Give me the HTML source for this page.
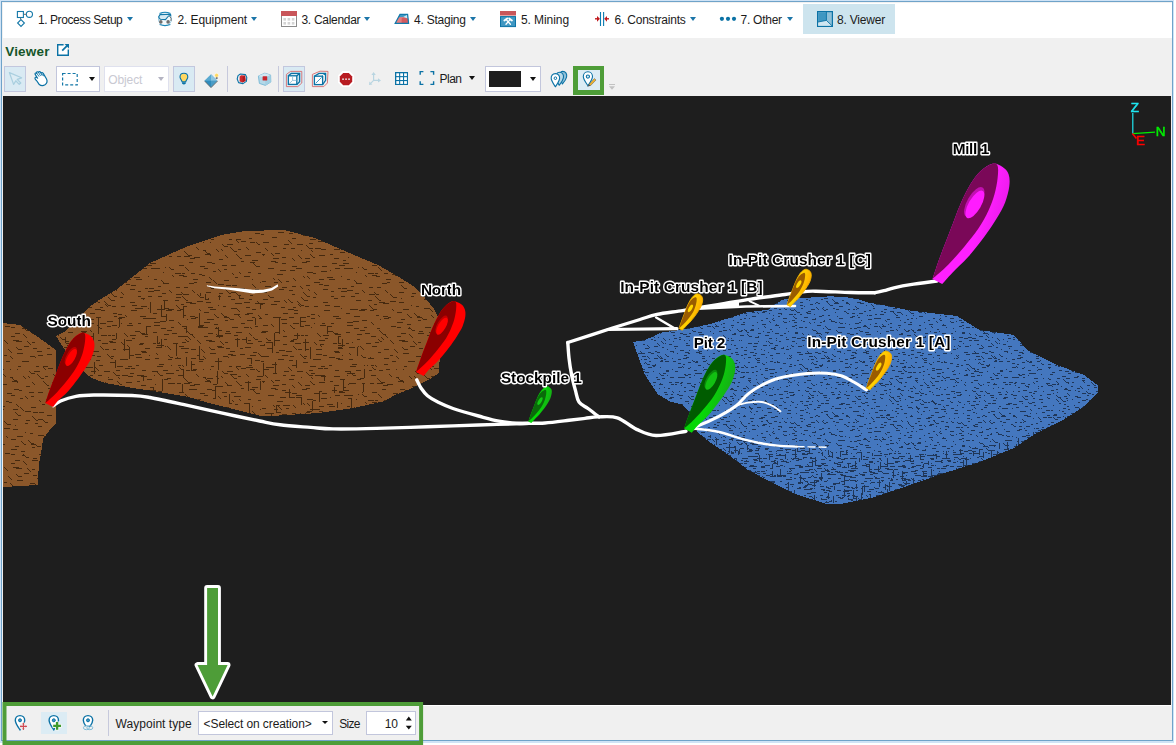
<!DOCTYPE html>
<html lang="en">
<head>
<meta charset="utf-8">
<title>Viewer</title>
<style>
html,body{margin:0;padding:0;}
body{width:1176px;height:745px;overflow:hidden;background:#fff;position:relative;font-family:"Liberation Sans",sans-serif;font-size:12px;color:#1b1b1b;}
.abs{position:absolute;}
#frame{left:0;top:0;width:1174px;height:743px;background:#cfe3f6;}
#frameline{left:1px;top:1px;width:1170px;height:738px;border:1px solid #6fa3c9;box-sizing:content-box;background:#f0f0f0;}
#menubar{left:3px;top:3px;width:1169px;height:35px;background:#fff;}
.mi{position:absolute;top:13px;height:14px;line-height:14px;font-size:12px;white-space:nowrap;color:#1b1b1b;}
.arr{position:absolute;width:0;height:0;border-left:3px solid transparent;border-right:3px solid transparent;border-top:4px solid #1b75a8;top:17px;}
.arrk{position:absolute;width:0;height:0;border-left:3.5px solid transparent;border-right:3.5px solid transparent;border-top:4px solid #111;}
#title{left:5.2px;top:43.5px;font-weight:bold;font-size:13.5px;letter-spacing:0.2px;color:#15562a;line-height:16px;}
#viewer{left:3px;top:96px;width:1168px;height:609px;background:#1e1e1e;overflow:hidden;}
#whiteline{left:3px;top:705px;width:1168px;height:1px;background:#fff;}
.tb{position:absolute;top:67px;height:24px;box-sizing:border-box;}
.sel{background:#d9eaf3;border:1px solid #c2c7de;}
.box{background:#fff;border:1px solid #c2c6dc;}
.sep{position:absolute;width:1px;background:#c8c8c8;}
.lbl{position:absolute;white-space:nowrap;font-size:12px;line-height:14px;}
</style>
</head>
<body>
<div id="frame" class="abs"></div>
<div id="frameline" class="abs"></div>
<div id="menubar" class="abs"></div>

<!-- MENU ITEMS -->
<div id="menu">
<div class="abs" style="left:803px;top:4px;width:92px;height:30px;background:#cde4ee;"></div>
<span class="mi" id="m1" style="left:38px;letter-spacing:-0.44px;">1. Process Setup</span><i class="arr" style="left:127px;"></i>
<span class="mi" id="m2" style="left:177.5px;letter-spacing:-0.1px;">2. Equipment</span><i class="arr" style="left:251px;"></i>
<span class="mi" id="m3" style="left:301.5px;letter-spacing:-0.3px;">3. Calendar</span><i class="arr" style="left:364px;"></i>
<span class="mi" id="m4" style="left:414px;letter-spacing:-0.23px;">4. Staging</span><i class="arr" style="left:470px;"></i>
<span class="mi" id="m5" style="left:521px;letter-spacing:-0.08px;">5. Mining</span>
<span class="mi" id="m6" style="left:614.5px;letter-spacing:-0.21px;">6. Constraints</span><i class="arr" style="left:690px;"></i>
<span class="mi" id="m7" style="left:740.5px;letter-spacing:-0.25px;">7. Other</span><i class="arr" style="left:787px;"></i>
<span class="mi" id="m8" style="left:837px;letter-spacing:-0.2px;">8. Viewer</span>
</div>


<svg class="abs" style="left:0;top:0" width="900" height="38" viewBox="0 0 900 38">
 <!-- 1 process -->
 <g fill="none" stroke="#1478a8" stroke-width="1.1">
  <rect x="17.4" y="11.5" width="6" height="6"/>
  <circle cx="29.4" cy="14.3" r="3.1"/>
  <path d="M21 19.6 L24.4 23 L21 26.4 L17.6 23 Z"/>
 </g>
 <path d="M24 14.3H26.2 M20.6 18v1.4" stroke="#666" stroke-width="1" fill="none"/>
 <!-- 2 equipment -->
 <g>
  <circle cx="165" cy="19" r="6.6" fill="#f4fafc" stroke="#8cc3dd" stroke-width="0.8"/>
  <path d="M159.5 13.6 Q165 11 170.5 13.6" fill="none" stroke="#1a86b8" stroke-width="1.1"/>
  <path d="M159.6 24.6 Q165 26.6 170.4 24.6" fill="none" stroke="#1a86b8" stroke-width="1.1"/>
  <path d="M158.6 17 L160 14.6 L170.6 14.3 L170.8 15.6 L168.5 16 L165.5 19.6 L160.3 19.3 Z" fill="#d5eaf3" stroke="#1478a8" stroke-width="1.1" stroke-linejoin="round"/>
  <path d="M169.6 16.2 Q171.8 18 171 21" fill="none" stroke="#666" stroke-width="0.9"/>
  <circle cx="160.8" cy="21.9" r="1.8" fill="#6e6e6e"/>
  <circle cx="168.1" cy="21.9" r="1.8" fill="#6e6e6e"/>
 </g>
 <!-- 3 calendar -->
 <g>
  <rect x="281.5" y="11.5" width="15" height="15" fill="#fff" stroke="#8c8c8c" stroke-width="1"/>
  <rect x="281" y="11" width="16" height="5" fill="#c9565a"/>
  <g fill="#d4d4d4">
   <rect x="283.4" y="18" width="2.6" height="2.6"/><rect x="287.6" y="18" width="2.6" height="2.6"/><rect x="291.8" y="18" width="2.6" height="2.6"/>
   <rect x="283.4" y="22" width="2.6" height="2.6"/><rect x="287.6" y="22" width="2.6" height="2.6"/><rect x="291.8" y="22" width="2.6" height="2.6"/>
  </g>
 </g>
 <!-- 4 staging -->
 <g>
  <path d="M395.2 23.3 L400 14.4 L407.6 14.4 L408.6 23.3 Z" fill="#e47f80"/>
  <path d="M401.6 18.4 L407.8 15 L408.6 23.3 L401.6 23.3 Z" fill="#d45a5e"/>
  <path d="M400 14.4 L407.6 14.4 L407.9 18.5 L403.5 17 L398.6 17.2 Z" fill="#3f97c2"/>
  <path d="M403.2 17 L407.4 14.8 L407.9 18.6 Z" fill="#cfe6f1"/>
  <path d="M395.2 23.3 L400 14.4 L407.6 14.4 L408.6 23.3 Z" fill="none" stroke="#0f79ab" stroke-width="1.2" stroke-linejoin="miter"/>
 </g>
 <!-- 5 mining -->
 <g>
  <rect x="500" y="11" width="16" height="4.6" fill="#c9565a"/>
  <rect x="500" y="15.6" width="16" height="0.6" fill="#f0b0b0"/>
  <rect x="500.5" y="16.6" width="15" height="10" fill="#3f97c2" stroke="#0b72a5" stroke-width="1"/>
  <g stroke="#fff" stroke-width="1.3" stroke-linecap="round" fill="none">
   <path d="M506 24.2 L510.3 19.4"/><path d="M510.4 24.2 L506 19.4"/>
   <path d="M504.4 20.4 L507.2 18.4" stroke-width="1.9"/><path d="M509.2 18.4 L511.9 20.4" stroke-width="1.9"/>
  </g>
 </g>
 <!-- 6 constraints -->
 <g>
  <path d="M600.5 12v14 M603.6 12v14" stroke="#0b7bb0" stroke-width="1.1" fill="none"/>
  <path d="M595 18.8h3" stroke="#c0181c" stroke-width="1.4"/>
  <path d="M597 15.9 L599.9 18.8 L597 21.7 Z" fill="#c0181c"/>
  <path d="M609 18.8h-3" stroke="#c0181c" stroke-width="1.4"/>
  <path d="M607 15.9 L604.2 18.8 L607 21.7 Z" fill="#c0181c"/>
 </g>
 <!-- 7 other -->
 <g fill="#0b72a5"><circle cx="721.9" cy="18.8" r="2.1"/><circle cx="728" cy="18.8" r="2.1"/><circle cx="734" cy="18.8" r="2.1"/></g>
 <!-- 8 viewer -->
 <g>
  <rect x="817.6" y="11.6" width="14.8" height="14.8" fill="#8fc0d8" stroke="#0b72a5" stroke-width="1.2"/>
  <path d="M818.2 12.2 H826.4 V20.4 L818.2 22 Z" fill="#3f97c2"/>
  <path d="M818.2 22 L826.4 20.4 L831.8 25.6 V25.8 H818.2 Z" fill="#cfe6f1"/>
  <path d="M826.4 12 V20.4 L832 25.8 M826.4 20.4 L818 22" fill="none" stroke="#0b72a5" stroke-width="0.9"/>
 </g>
</svg>
<div id="title" class="abs">Viewer</div>

<!-- TOOLBAR -->
<div id="toolbar">
<svg class="abs" style="left:50px;top:40px" width="30" height="20" viewBox="50 40 30 20">
 <path d="M63.6 44.8 H57.7 V55.3 H68.3 V49.6" fill="#fff" stroke="#0b72a5" stroke-width="1.4"/>
 <path d="M62.2 50.6 L68 44.9" stroke="#0b72a5" stroke-width="1.7" fill="none"/>
 <path d="M64.6 44 H69 V48.4 Z" fill="#0b72a5"/>
</svg>
<div class="tb sel" style="left:4px;top:66px;width:22px;height:26px;"></div>
<div class="tb box" style="left:56px;top:66px;width:44px;height:26px;"></div>
<div class="tb box" style="left:104px;top:66px;width:65px;height:26px;border-color:#dfe1ee;"></div>
<div class="tb sel" style="left:173px;top:66px;width:22px;height:26px;"></div>
<div class="tb sel" style="left:283px;top:66px;width:22px;height:26px;"></div>
<div class="tb box" style="left:485px;top:66px;width:56px;height:26px;"></div>
<div class="abs" style="left:573px;top:66px;width:31px;height:28.5px;background:#4e9d38;"></div>
<div class="abs" style="left:577.6px;top:70.2px;width:22.4px;height:20.2px;background:#dcecf4;"></div>
<div class="abs" style="left:489px;top:71px;width:32px;height:16px;background:#1e1e1e;"></div>
<span class="lbl" id="tobj" style="left:108.2px;top:72.5px;color:#c9c9d2;letter-spacing:-0.1px;">Object</span>
<span class="lbl" id="tplan" style="left:439.5px;top:71.7px;letter-spacing:-0.5px;">Plan</span>
<i class="arrk" style="left:88.5px;top:77px;"></i>
<i class="arrk" style="left:157.5px;top:77px;border-top-color:#b4b4c2;"></i>
<i class="arrk" style="left:468.5px;top:76px;"></i>
<i class="arrk" style="left:529.5px;top:77px;"></i>
<div class="sep" style="left:227px;top:66px;height:26px;background:#c6c9dc;"></div>
<div class="sep" style="left:278px;top:66px;height:26px;background:#c6c9dc;"></div>
<svg class="abs" style="left:0;top:60px" width="630" height="36" viewBox="0 60 630 36">
 <!-- pointer -->
 <path d="M9.4 72.6 L21.6 77.8 L17.2 79.4 L20.8 83 L19.2 84.4 L15.8 80.8 L13.6 84.4 Z" fill="#dcecf4" stroke="#a9cfdf" stroke-width="1.25" stroke-linejoin="round"/>
 <!-- hand -->
 <g fill="#fff" stroke="#0b72a5" stroke-width="1.2" stroke-linejoin="round" stroke-linecap="round">
  <path d="M36.5 80.5 C34.8 79.3 34.6 77.6 35.6 77.2 C36.4 76.9 37 77.4 37.6 78.2 L35.2 74.4 C34.6 73.2 36 72.4 36.8 73.4 L36.6 73 C36.2 71.8 37.8 71.3 38.4 72.3 L38.6 72.4 C38.6 71.4 40 71.2 40.5 72.2 L41.2 73 C41.6 72.2 42.8 72.4 43.2 73.4 L46.4 78.8 C47.6 81.2 47 83.4 45 84.8 C43 86 40.6 85.6 39 84.2 Z"/>
  <path d="M38.9 76.3 L36.9 73.4 M40.4 75.6 L38.5 72.5 M42 75.4 L40.6 72.4 M43.5 75.9 L42.6 74" fill="none" stroke-width="0.9"/>
 </g>
 <!-- dashed rect -->
 <rect x="62.6" y="73.5" width="14.6" height="11.4" fill="none" stroke="#1478a8" stroke-width="1.2" stroke-dasharray="3 2"/>
 <!-- bulb -->
 <g>
  <path d="M183.9 73.2 C186.4 73.2 187.8 75 187.8 77 C187.8 79 186 80 185.8 81.8 H182 C181.8 80 180 79 180 77 C180 75 181.4 73.2 183.9 73.2 Z" fill="#ffd862" stroke="#0b72a5" stroke-width="1.1"/>
  <path d="M182 82.2 H185.8 V83.6 Q183.9 85.6 182 83.6 Z" fill="#0b72a5"/>
 </g>
 <!-- diamond -->
 <g>
  <path d="M211 74.2 L217.4 80.8 L211 87.4 L204.4 80.8 Z" fill="#5aa9d0"/>
  <path d="M211 74.2 L217.4 80.8 L211 80.8 Z" fill="#8cc6e2"/>
  <path d="M204.4 80.8 L211 80.8 L211 87.4 Z" fill="#2f8cbd"/>
  <path d="M211 80.8 L217.4 80.8 L211 87.4 Z" fill="#4a9cc6"/>
  <path d="M204.8 81.2 L211 87.6 L217.6 81" fill="none" stroke="#6a6a6a" stroke-width="0.9"/>
  <circle cx="216.6" cy="75.4" r="2.1" fill="#ffd862" stroke="#fff" stroke-width="0.6"/>
  <rect x="215.8" y="77.2" width="1.8" height="1.8" fill="#777"/>
 </g>
 <!-- red cube -->
 <g>
  <path d="M240.4 74 L245.4 74.6 L246.8 77.4 L246.4 81.4 L243 83.6 L238.6 82.6 L237.2 79 L238 75.6 Z" fill="#e8f3f8" stroke="#0b72a5" stroke-width="1.1" stroke-linejoin="round"/>
  <path d="M241 75.2 L245 75.6 L245.6 80.8 L242.6 82.6 L239.6 81.6 L239.6 76.4 Z" fill="#cf2a2e"/>
  <path d="M242.6 77 L245 75.6 L245.6 80.8 L242.6 82.6 Z" fill="#b01c20"/>
 </g>
 <!-- translucent cube -->
 <g>
  <path d="M258.4 76 L264.8 73.2 L270.6 75 L270.8 82 L265.4 85.4 L259.4 83.4 Z" fill="#b4d8e8" stroke="#7fbcd8" stroke-width="1" stroke-linejoin="round"/>
  <path d="M258.4 76 L264.8 73.2 L270.6 75 L265 77.8 Z" fill="#d2e8f2"/>
  <path d="M265 77.8 L270.6 75 L270.8 82 L265.4 85.4 Z" fill="#a3cfe3"/>
  <rect x="262.6" y="76.2" width="4.6" height="4.4" fill="#c8262c" rx="0.6"/>
 </g>
 <!-- cube icon 1 -->
 <g fill="none">
  <path d="M286.4 74.4 L290.6 71.4 L301.8 71.4 L301.8 83 L297.8 86.6 L286.4 86.6 Z" stroke="#d56c6e" stroke-width="0.9"/>
  <rect x="288.4" y="75.8" width="8.4" height="8.6" stroke="#0b72a5" stroke-width="1.3" fill="#fff"/>
  <path d="M288.4 75.8 L291.2 73.4 H299.6 V81.8 L296.8 84.4 M296.8 75.8 L299.6 73.4" stroke="#0b72a5" stroke-width="1.3"/>
  <path d="M292.6 76.2 V80.4 H296.4 M292.6 80.4 L289 83.8" stroke="#8fc0d8" stroke-width="0.9"/>
 </g>
 <!-- cube icon 2 -->
 <g fill="none">
  <path d="M312.4 74.4 L320 71.2 L328 71.4 L327.4 83 L323.8 86.6 L312.4 86.6 Z" stroke="#d56c6e" stroke-width="0.9"/>
  <rect x="314.4" y="76.2" width="8.2" height="8.4" stroke="#0b72a5" stroke-width="1.3" fill="#fff"/>
  <path d="M314.4 76.2 L319 73.4 H325.6 V80.4 L322.6 84.6 M322.6 76.2 L325.6 73.4" stroke="#0b72a5" stroke-width="1.3"/>
  <path d="M315.6 83.4 L321.6 77.4" stroke="#3f97c2" stroke-width="1"/>
  <circle cx="323.8" cy="75.6" r="0.9" fill="#fff"/>
 </g>
 <!-- stop -->
 <g>
  <path d="M342.4 71 H349.6 L354 75.6 V82.6 L349.6 87 H342.4 L338 82.6 V75.6 Z" fill="#fff"/>
  <path d="M343.2 73 H348.8 L352.2 76.4 V81.8 L348.8 85.2 H343.2 L339.8 81.8 V76.4 Z" fill="#b81c22"/>
  <g fill="#e6d6d6"><rect x="342.2" y="78.4" width="1.7" height="1.6"/><rect x="345.2" y="78.4" width="1.7" height="1.6"/><rect x="348.2" y="78.4" width="1.7" height="1.6"/></g>
 </g>
 <!-- axes faded -->
 <g stroke="#b9d5e1" stroke-width="1.2" fill="#b9d5e1">
  <path d="M373.6 80.4 V74 M373.6 80.4 H378.6 M373.6 80.4 L370.4 83.6" fill="none"/>
  <path d="M371.4 75 L373.6 72 L375.8 75 Z" stroke="none"/>
  <path d="M378 78.2 L381 80.4 L378 82.6 Z" stroke="none"/>
  <path d="M369 85 L369.4 81.6 L372.4 84.6 Z" stroke="none"/>
 </g>
 <!-- grid -->
 <g>
  <rect x="395" y="72" width="13" height="13" fill="#0b72a5"/>
  <g fill="#fff">
   <rect x="396.3" y="73.3" width="2.8" height="2.8"/><rect x="400.2" y="73.3" width="2.8" height="2.8"/><rect x="404.1" y="73.3" width="2.8" height="2.8"/>
   <rect x="396.3" y="77.2" width="2.8" height="2.8"/><rect x="400.2" y="77.2" width="2.8" height="2.8"/><rect x="404.1" y="77.2" width="2.8" height="2.8"/>
   <rect x="396.3" y="81.1" width="2.8" height="2.8"/><rect x="400.2" y="81.1" width="2.8" height="2.8"/><rect x="404.1" y="81.1" width="2.8" height="2.8"/>
  </g>
 </g>
 <!-- brackets -->
 <path d="M423.4 71.6 H420.2 V74.8 M430.4 71.6 H433.6 V74.8 M423.4 84.4 H420.2 V81.2 M430.4 84.4 H433.6 V81.2" fill="none" stroke="#0b72a5" stroke-width="1.4"/>
 <!-- pins -->
 <g stroke="#0b72a5" stroke-width="1.1" stroke-linejoin="round">
  <path d="M562.6 71.4 C565.8 71.4 567.2 74.2 566.6 77 C566 80 563.6 82.6 562.4 84 C561 81.6 559.6 79.4 559.4 76.4 C559.2 73.4 560.6 71.4 562.6 71.4 Z" fill="#8fc0d8"/>
  <path d="M559.4 72.2 C562.6 72.2 564 75 563.4 77.8 C562.8 80.8 560.4 83.6 559.2 85.2 C557.8 82.8 556 80.4 555.8 77.4 C555.6 74.4 557.2 72.2 559.4 72.2 Z" fill="#b9d9e8"/>
  <path d="M555.4 73.6 C558.4 73.6 559.8 76 559.6 78.4 C559.4 81.2 556.8 84.6 555.4 86.8 C554 84.6 551.4 81.2 551.2 78.4 C551 76 552.4 73.6 555.4 73.6 Z" fill="#fff"/>
  <circle cx="555.4" cy="78.2" r="1.3" fill="#fff" stroke-width="1"/>
 </g>
 <!-- pin with pencil -->
 <g>
  <path d="M587.9 71.8 C590.9 71.8 592.5 74.2 592.5 76.6 C592.5 79.6 589.4 83.4 587.9 85.6 C586.4 83.4 583.3 79.6 583.3 76.6 C583.3 74.2 584.9 71.8 587.9 71.8 Z" fill="#fff" stroke="#0b72a5" stroke-width="1.1"/>
  <circle cx="587.9" cy="76.6" r="1.6" fill="#dcecf4" stroke="#0b72a5" stroke-width="1.1"/>
  <path d="M589 84.4 L594.4 78.6 L596 80 L590.4 85.8 Z" fill="#f2b62c" stroke="#555" stroke-width="0.5"/>
  <path d="M589 84.4 L590.4 85.8 L587.2 86.8 Z" fill="#444"/>
 </g>
 <!-- overflow -->
 <path d="M609 84.5 H615" stroke="#c2c2c2" stroke-width="1"/>
 <path d="M609 86.2 H615 L612 89.8 Z" fill="#c2c2c2"/>
</svg>
</div>

<!-- VIEWER -->
<div id="viewer" class="abs"><!--VIEWER_START-->
<svg width="1168" height="609" viewBox="3 96 1168 609" style="position:absolute;left:0;top:0;display:block">
<defs>
<pattern id="pbrown" width="193" height="127" patternUnits="userSpaceOnUse"><rect width="193" height="127" fill="#8b572a"/><path id="pbrown_p" d="M1 3.5h6M12 0.5h6M17 1.5h1M26 5.5h4M32 1l3 3M43 0l4 4M47 4.5h2M52 1.5h6M59 6.5h6M69 0.5h3M70 1.5h1M80 4.5h6M89 3.5h4M99 4l3 3M105 1l4 4M112 4.5h5M117 0l3 3M120 3.5h2M126 1.5h6M137 0.5h3M141 4.5h5M150 6.5h3M155 3.5h1M169 2.5h3M177 2.5h4M184 2.5h6M190 4.5h5M7 12.5h5M14 8.5h5M19 9.5h3M29 11.5h5M38 11.5h5M48 7.5h3M57 8.5h5M59 8l4 4M63 12.5h3M66 12.5h1M78 7.5h5M82 8.5h3M89 9.5h4M99 12.5h5M109 8.5h5M113 7.5h4M121 12.5h5M129 12.5h5M139 9.5h5M146 11.5h6M150 9.5h6M165 13.5h1M169 13l2 2M171 15.5h3M179 11.5h5M185 13l4 4M189 8.5h4M6 20.5h3M11 14.5h4M20 17.5h3M25 15l3 3M31 15.5h3M39 19l2 2M46 18l2 2M55 18.5h3M65 19.5h3M75 14.5h6M84 20.5h6M87 16.5h6M97 16.5h5M103 14.5h6M114 18.5h6M120 19.5h3M128 17.5h6M137 16.5h1M142 14.5h5M151 14.5h6M155 14.5h5M163 18.5h1M175 19.5h6M182 19.5h3M191 19.5h4M9 21.5h3M16 23l3 3M20 26l4 4M31 26.5h4M35 26.5h1M42 23.5h3M51 22.5h6M59 25.5h1M69 27.5h4M80 24l2 2M85 25l4 4M93 27.5h3M100 24l3 3M110 22l2 2M114 22l3 3M126 25.5h5M134 23.5h6M136 25.5h6M148 22.5h1M154 25.5h3M161 26l3 3M172 21l2 2M179 21.5h5M183 22.5h4M0 25.5h5M1 28.5h3M13 28.5h5M15 31l3 3M18 34.5h3M25 30.5h6M33 31.5h5M39 31.5h5M47 34.5h5M59 30l4 4M67 28.5h1M72 32.5h6M81 28.5h4M89 33.5h5M99 32.5h4M107 32l3 3M113 31.5h4M121 28.5h6M126 30.5h4M131 31.5h5M145 34.5h3M149 34.5h5M158 32.5h3M163 29.5h6M176 33.5h4M184 33.5h4M189 29.5h5M4 40l3 3M7 43.5h4M13 38.5h5M26 39.5h4M32 35l4 4M36 39.5h2M38 38.5h4M42 38l3 3M45 41.5h3M57 41.5h3M62 35.5h4M69 38.5h5M75 41l2 2M77 43.5h4M86 35.5h5M96 36.5h4M99 40.5h3M110 38l4 4M114 42.5h3M115 35l2 2M121 38l3 3M130 35.5h5M138 37.5h3M148 37.5h6M154 36.5h6M162 39.5h4M169 36l3 3M176 40.5h6M181 38l2 2M183 40.5h3M192 36l3 3M4 47.5h6M13 48.5h5M15 44.5h1M25 42.5h3M35 42.5h3M38 45.5h4M51 48.5h6M56 45.5h3M64 47l3 3M67 50.5h3M70 45.5h5M81 47.5h6M91 46l3 3M95 45l3 3M98 48.5h2M104 47l4 4M108 51.5h3M108 43l3 3M111 46.5h4M120 43.5h3M130 48.5h5M138 42.5h3M141 44.5h4M148 42.5h4M158 42.5h4M163 46.5h5M175 46.5h4M182 42l4 4M186 46.5h2M186 48.5h6M6 55l2 2M17 55.5h6M25 51.5h1M30 52.5h3M38 54.5h5M43 54l4 4M53 53.5h4M59 55.5h4M68 49.5h4M78 50.5h6M88 53.5h4M95 55.5h6M100 53.5h3M105 50l3 3M112 52.5h4M121 52.5h4M132 51.5h5M141 52.5h6M148 54.5h1M157 55.5h4M161 55.5h4M168 55.5h6M176 51l4 4M180 55.5h4M181 50.5h3M190 49.5h6M2 63.5h3M11 58.5h5M21 60l3 3M24 63.5h2M28 59l3 3M31 62.5h3M31 63.5h4M45 61l3 3M52 60.5h4M54 59.5h6M65 61l4 4M72 60.5h3M82 63.5h6M90 59.5h5M96 63.5h5M101 56.5h4M114 62.5h3M118 60.5h4M125 61l2 2M131 56.5h6M140 62.5h6M153 59.5h4M161 62.5h6M166 56.5h6M177 56.5h4M183 61.5h3M190 62.5h5M11 68.5h6M15 65.5h4M21 70.5h4M32 66.5h3M35 63l2 2M37 65.5h4M48 69.5h4M54 66.5h6M59 63.5h3M66 64.5h3M80 63.5h4M88 65.5h6M89 69.5h5M100 69.5h6M107 67.5h6M118 64.5h4M121 69.5h1M129 69.5h3M138 69.5h3M143 64.5h5M154 68.5h6M160 67.5h6M169 66.5h5M178 68l3 3M187 65.5h1M191 64.5h5M5 72.5h5M11 73.5h4M22 74.5h3M23 73l3 3M26 76.5h3M33 77.5h4M39 73.5h6M51 73.5h5M57 73l2 2M62 72.5h3M70 71.5h5M78 70l3 3M90 76l2 2M97 71l3 3M100 74.5h2M107 72.5h4M112 71.5h5M118 73.5h1M127 71.5h6M135 77.5h5M139 77l2 2M141 79.5h4M154 71.5h6M161 74.5h5M167 76.5h5M171 73.5h3M184 74.5h3M186 76l4 4M190 80.5h3M11 82.5h4M15 79.5h5M23 80l4 4M32 79.5h6M41 81.5h4M43 78.5h6M56 79l3 3M60 83l2 2M62 85.5h3M68 78.5h5M73 84l2 2M75 86.5h3M82 78.5h4M90 82.5h4M101 81.5h6M108 81.5h3M112 81.5h3M124 79l4 4M130 81.5h6M142 80.5h6M145 82.5h3M153 78.5h4M164 80.5h5M172 79.5h5M178 82.5h5M188 83l3 3M192 81l3 3M4 86l4 4M13 86.5h6M16 87.5h6M27 87l4 4M32 88.5h3M42 85.5h5M49 85.5h5M55 86.5h3M65 87.5h4M71 90.5h1M82 86.5h5M90 90.5h4M98 86.5h3M102 89.5h6M110 88.5h6M121 88l3 3M126 86.5h6M132 84.5h3M140 89.5h4M153 89.5h3M159 88.5h1M164 85.5h3M173 89.5h5M182 88.5h4M185 85l2 2M187 87.5h2M8 95l4 4M16 93l2 2M18 95.5h4M24 92.5h5M33 94.5h4M37 97.5h5M47 94.5h3M52 93.5h3M60 98.5h4M67 91.5h5M74 94.5h6M86 96.5h6M93 97.5h6M100 92l4 4M105 95.5h4M113 95.5h3M123 95.5h6M127 91l2 2M141 97.5h5M145 94.5h5M156 93.5h6M165 92.5h1M167 92l4 4M179 92.5h5M185 98.5h3M191 95.5h5M4 101.5h3M10 102l3 3M17 99.5h6M30 102.5h5M35 103.5h1M38 101.5h5M47 100.5h5M57 101.5h6M65 99l3 3M68 102.5h4M72 102.5h4M83 98.5h3M89 101.5h6M97 102.5h4M107 100l4 4M111 104.5h2M111 102.5h3M120 105.5h4M130 101.5h4M136 103.5h6M142 98.5h5M149 101.5h1M156 99l2 2M168 101l2 2M170 103.5h3M175 104.5h6M177 103l2 2M191 104.5h5M6 107.5h4M18 112.5h3M22 107.5h6M28 107.5h1M36 112.5h3M43 112.5h5M56 111.5h3M62 106.5h5M68 107.5h3M79 110.5h5M85 105.5h6M96 106.5h4M99 111.5h4M110 108.5h5M117 112.5h6M123 105.5h5M128 112.5h4M136 111.5h3M145 105.5h5M157 112.5h6M159 110.5h5M171 111.5h1M178 111.5h3M182 111l2 2M191 110.5h4M0 115.5h4M10 115.5h1M17 115.5h1M29 117l2 2M31 119.5h4M34 117.5h6M43 113l3 3M48 114.5h5M57 115.5h5M63 115l2 2M65 117.5h2M70 115.5h6M80 119.5h4M91 117.5h5M95 113l4 4M104 117.5h6M113 118l3 3M116 121.5h4M116 116.5h4M125 114.5h5M131 114.5h4M142 116.5h4M152 117.5h6M156 117l4 4M160 121.5h3M163 116.5h5M176 116.5h3M179 113l2 2M181 115.5h2M186 116.5h4M10 123.5h3M11 123l3 3M14 126.5h3M23 122l3 3M28 122l2 2M37 120l4 4M41 124.5h3M45 122.5h3M53 120l3 3M63 125.5h5M72 121l3 3M78 126l3 3M82 126.5h5M90 121.5h3M98 121.5h4M108 123.5h1M118 123l2 2M122 121.5h6M128 122.5h5M141 122.5h6M147 125.5h5M154 121.5h1M164 125.5h4M167 124.5h4M178 121.5h5M184 124l4 4M188 128.5h4M3 120l3 3" stroke="#45290f" stroke-width="1" fill="none" shape-rendering="crispEdges"/><use href="#pbrown_p" x="-193"/><use href="#pbrown_p" y="-127"/><use href="#pbrown_p" x="-193" y="-127"/></pattern>
<pattern id="pblue" width="167" height="113" patternUnits="userSpaceOnUse"><rect width="167" height="113" fill="#4477bf"/><path id="pblue_p" d="M1 0l1 1M5 2.5h1M11 0.5h2M16 1.5h1M21 1l1 1M28 4.5h2M32 0.5h3M39 3.5h4M45 1.5h2M49 2.5h4M54 1.5h3M59 1.5h2M63 1.5h3M71 1.5h1M73 1l1 1M80 4.5h4M86 4.5h4M90 2l1 1M98 2l1 1M100 2l2 2M102 4.5h3M108 1.5h1M111 2.5h2M118 0.5h3M124 2.5h3M128 4.5h1M134 1.5h3M139 1.5h2M141 1.5h3M150 0.5h2M153 1.5h2M160 2l3 3M164 4.5h1M6 7.5h3M8 7.5h2M18 6.5h4M18 4.5h2M28 7.5h2M31 5.5h3M37 6.5h3M44 6.5h2M45 7l2 2M50 4.5h1M57 5.5h2M63 5l1 1M66 6.5h2M73 8.5h2M78 8l1 1M85 7.5h4M88 7.5h1M95 6.5h4M101 6.5h1M106 8.5h2M107 6.5h3M115 8.5h1M119 7l1 1M123 6l1 1M124 7.5h2M130 7.5h4M135 6.5h1M142 5.5h2M146 6l3 3M153 7.5h4M156 4l3 3M161 8.5h2M1 5.5h3M2 12.5h4M7 9.5h1M12 11.5h4M17 13.5h4M21 11.5h1M30 11l1 1M31 12.5h3M34 9.5h4M39 11l1 1M42 9.5h2M49 11l1 1M50 12.5h2M55 11.5h3M60 10.5h3M67 13.5h3M68 9.5h2M76 11.5h3M82 13.5h4M86 10.5h2M93 10.5h1M96 11.5h1M103 9.5h4M106 10.5h2M113 9.5h3M118 10.5h3M122 9.5h1M129 13.5h3M131 13.5h2M139 12l2 2M141 14.5h3M144 9.5h4M147 13.5h2M154 12.5h2M156 13.5h3M166 10.5h1M5 13l1 1M9 14.5h1M16 16.5h3M20 14.5h2M28 13.5h4M31 14.5h3M34 17.5h3M41 17.5h1M45 14.5h2M53 16l2 2M59 17.5h4M63 14.5h2M68 15.5h3M73 16.5h2M76 15.5h3M85 16.5h3M87 14.5h2M93 15.5h4M100 13.5h1M102 16.5h3M108 14.5h4M116 14.5h1M121 16l3 3M123 16l1 1M131 15.5h4M137 14.5h4M141 17.5h4M146 17l3 3M149 13l1 1M150 14.5h3M156 16l3 3M159 19.5h3M159 17l3 3M164 15l2 2M166 17.5h2M4 19l1 1M10 20.5h3M15 19.5h4M18 18.5h3M24 21l1 1M25 22.5h2M28 22.5h2M34 19.5h3M38 21.5h1M44 19.5h3M47 20.5h1M57 20.5h2M62 22.5h2M63 20.5h1M68 21.5h2M76 19.5h1M80 18.5h3M87 19l2 2M89 21.5h3M89 19.5h3M98 18.5h1M102 22.5h3M104 19.5h1M109 22l1 1M110 23.5h2M119 19.5h1M121 19.5h2M129 21.5h2M134 20.5h1M140 20l1 1M143 20.5h3M148 22.5h2M153 19.5h4M160 21.5h2M163 20.5h2M5 22.5h3M10 24.5h3M15 25.5h2M20 23.5h3M27 23.5h3M30 26.5h3M35 22.5h3M39 24l1 1M40 25.5h2M46 25.5h3M53 26.5h2M56 26.5h1M65 24.5h4M69 27.5h2M71 23.5h1M76 26l2 2M78 28.5h2M80 23.5h2M89 23.5h3M94 24l1 1M95 25.5h2M98 23l1 1M106 23.5h2M109 23.5h3M115 24.5h3M122 25.5h2M126 26.5h2M131 25.5h3M134 26l3 3M137 29.5h3M143 24.5h1M144 23l2 2M146 25.5h3M151 26.5h4M154 25.5h1M159 22.5h3M164 22.5h4M4 30.5h1M10 28.5h4M14 27l2 2M20 29.5h2M22 28.5h1M26 31.5h3M35 28.5h1M36 30.5h4M46 28.5h3M47 29.5h1M56 27.5h2M61 27.5h2M67 28.5h4M68 30l2 2M70 32.5h2M73 28.5h3M83 28.5h3M87 27.5h2M92 30.5h1M97 29.5h3M101 30.5h4M105 30.5h2M112 29.5h2M119 31.5h1M121 27.5h3M130 31.5h2M132 29l3 3M139 30l2 2M141 32.5h3M142 30.5h2M147 28.5h4M152 27.5h2M159 28.5h1M165 31.5h3M7 32.5h3M8 32.5h2M16 35.5h2M20 35.5h3M27 34.5h4M31 34.5h3M35 31.5h1M39 35.5h1M48 35.5h3M50 33.5h3M57 31.5h3M63 32.5h4M66 34.5h3M73 33.5h4M78 33.5h3M84 33.5h2M88 32.5h2M93 35.5h2M97 31.5h3M102 34.5h4M107 33.5h2M117 32.5h2M118 35.5h3M124 34l1 1M131 35.5h2M136 34.5h3M139 32.5h4M144 33.5h4M152 32.5h1M158 34l2 2M160 36.5h3M162 34.5h3M165 32.5h3M2 38.5h4M10 38.5h4M14 38.5h3M17 36.5h3M21 38.5h2M26 36.5h1M32 39.5h4M41 39l1 1M46 39.5h1M47 40.5h2M55 39.5h3M60 37.5h4M64 39.5h4M72 38.5h4M75 37.5h2M80 39.5h3M88 36l1 1M88 40.5h1M96 38l1 1M97 39.5h3M102 37.5h3M107 37l2 2M109 39.5h2M111 38.5h4M119 40l3 3M122 43.5h2M121 39.5h3M129 36.5h4M130 36.5h3M136 37.5h4M142 36.5h3M146 36.5h1M155 38.5h2M161 39.5h3M166 36.5h1M7 43.5h4M12 44.5h2M13 43.5h2M19 44.5h4M26 45.5h2M31 43l2 2M34 42.5h2M44 44.5h4M44 44l2 2M46 46.5h3M50 45.5h4M54 42l3 3M61 40l3 3M64 43.5h3M66 44.5h1M70 43.5h2M80 41.5h3M81 42l2 2M89 43l3 3M92 46.5h2M95 42l3 3M100 42.5h4M106 41.5h2M110 41.5h1M115 40.5h4M120 43l1 1M126 41.5h1M130 43.5h1M136 43.5h2M139 41.5h4M143 44l2 2M145 46.5h2M152 43.5h3M156 40.5h3M159 44.5h1M1 43.5h3M3 45.5h3M7 45.5h2M13 46.5h1M16 48.5h2M23 46l1 1M24 47.5h3M26 48.5h1M36 47.5h1M39 47.5h2M46 46.5h4M50 47.5h1M55 45.5h2M59 47.5h1M63 49.5h2M69 47.5h2M75 49.5h3M78 47l3 3M85 46.5h3M92 48.5h3M97 46.5h3M101 49.5h2M105 48.5h1M112 48.5h1M118 47.5h2M121 46.5h1M129 45.5h1M130 46.5h1M139 48.5h2M141 49.5h3M148 45.5h1M153 46.5h1M158 45.5h4M163 48.5h1M4 52l2 2M11 52.5h1M16 52.5h2M21 51.5h4M27 53.5h3M32 52.5h3M36 49.5h1M41 52.5h1M49 51.5h3M54 50.5h2M55 53.5h1M62 50.5h4M66 51.5h3M73 51.5h1M76 52.5h2M84 52l2 2M86 54.5h3M86 50.5h1M94 52.5h2M97 53.5h1M104 50.5h1M109 50.5h2M116 52.5h4M121 53.5h4M125 53.5h1M130 51.5h2M137 51l1 1M138 52.5h3M141 54l2 2M143 56.5h3M145 52.5h3M150 52l2 2M152 54.5h3M158 49.5h1M163 53.5h3M0 49.5h2M3 55.5h2M9 55.5h2M11 56.5h4M20 57l3 3M23 57.5h3M29 56l2 2M31 54.5h2M38 56.5h2M45 55.5h4M51 54.5h1M54 56l2 2M56 58.5h3M62 57.5h3M65 54l3 3M73 57.5h3M75 58.5h4M80 54.5h4M85 56.5h2M90 55.5h2M98 55.5h1M101 56.5h4M106 55.5h2M111 55.5h4M119 54.5h1M122 56.5h4M125 55.5h2M134 56l1 1M140 57l3 3M144 58.5h2M149 56l1 1M155 56.5h4M156 58.5h3M164 55.5h3M2 58.5h4M12 59.5h2M17 62.5h4M23 60.5h3M26 63l1 1M27 64.5h3M31 59.5h2M37 60.5h4M39 63.5h2M45 58l1 1M46 59.5h2M54 60l3 3M58 59l3 3M61 62.5h3M64 59.5h2M65 61.5h1M70 60l1 1M80 61.5h4M84 60.5h2M87 61l2 2M89 63.5h3M96 62.5h3M97 61l3 3M100 64.5h2M106 61.5h3M112 59.5h3M115 62.5h1M118 58.5h3M123 62l1 1M124 63.5h2M132 62.5h3M138 62.5h3M140 59.5h3M144 62.5h1M149 61l2 2M158 61.5h3M161 59.5h1M1 59.5h3M4 65.5h4M6 64.5h4M11 65.5h4M20 64.5h1M23 67.5h3M30 63.5h3M32 66.5h2M41 67.5h4M42 67.5h2M51 66.5h1M57 64.5h2M62 65.5h2M65 67.5h2M72 66.5h1M76 63.5h2M81 67l2 2M83 69.5h2M85 64l1 1M86 65.5h3M93 63.5h2M98 63l3 3M103 65.5h3M108 67l2 2M111 66.5h3M116 63.5h2M122 66.5h1M129 65.5h1M134 64.5h1M136 66.5h4M141 65.5h3M150 66.5h3M153 64.5h3M157 64.5h4M164 67.5h2M3 69.5h3M10 69.5h1M14 68.5h3M18 72.5h4M28 70.5h1M29 71.5h1M36 69.5h2M39 69.5h1M44 71.5h4M49 71.5h2M57 71.5h1M61 69.5h3M66 70.5h2M73 68.5h4M76 68l2 2M81 68l3 3M89 68.5h4M94 71.5h1M99 69.5h4M106 70.5h3M107 70.5h4M116 69.5h3M120 71.5h3M127 68.5h2M132 71.5h4M137 70.5h1M139 68l2 2M146 70.5h2M149 68.5h3M156 72.5h4M163 69.5h1M0 69.5h3M0 76l1 1M1 77.5h3M7 74.5h2M11 76.5h2M20 72.5h4M22 76.5h4M28 74.5h1M34 74.5h1M40 73.5h3M45 76.5h3M51 76.5h4M52 75.5h3M60 72.5h2M62 74.5h2M69 74.5h3M76 76.5h1M82 72l2 2M86 75.5h1M88 72.5h2M96 76.5h3M100 73.5h4M109 72.5h2M111 74.5h1M119 74.5h4M120 74.5h1M128 74l1 1M132 76.5h3M138 73.5h2M141 74.5h1M148 76.5h2M153 73.5h2M158 75.5h2M164 73l3 3M167 76.5h3M4 80.5h4M11 77.5h3M13 77l2 2M20 80l2 2M22 82.5h2M25 77.5h4M31 79.5h1M36 78l3 3M41 78.5h4M46 78.5h4M51 78l2 2M53 80.5h3M55 78.5h4M61 77.5h1M66 81l1 1M71 78.5h1M75 77.5h3M82 79.5h4M91 79.5h4M93 78.5h4M98 81l3 3M101 84.5h3M103 78.5h4M107 77.5h3M114 79.5h1M119 79.5h1M123 78.5h1M132 79.5h3M136 80.5h1M142 78.5h3M147 77.5h1M150 77.5h2M155 81l1 1M159 76l3 3M162 79.5h3M166 77.5h2M1 83.5h3M9 85.5h2M13 83.5h2M18 83.5h2M21 83.5h1M29 85.5h2M34 84.5h2M38 82.5h2M46 85.5h2M49 83.5h3M55 85.5h4M58 82.5h4M67 82.5h1M72 82l2 2M73 84l3 3M76 87.5h3M80 84.5h2M83 82.5h2M93 82.5h2M95 85.5h4M99 81.5h1M106 82.5h3M111 83.5h2M116 82l1 1M117 83.5h2M122 83l1 1M123 84.5h3M126 83l3 3M129 86.5h3M133 82.5h2M140 85.5h3M143 83.5h4M148 81l3 3M154 82l2 2M156 84.5h2M158 83.5h2M165 82.5h2M2 90.5h1M11 86l1 1M12 87.5h2M17 87.5h3M22 89.5h1M24 87.5h4M32 89.5h1M34 89.5h3M40 88.5h2M45 88.5h4M49 86.5h2M58 86l3 3M61 89.5h2M62 86.5h4M66 87l2 2M71 89l1 1M78 89.5h1M84 86.5h3M89 86l2 2M94 86.5h3M101 87.5h1M105 89.5h1M110 87.5h4M113 88.5h1M121 88.5h4M126 88.5h2M132 88.5h2M138 86.5h2M139 87.5h4M146 88l1 1M151 90.5h3M154 89.5h2M160 89.5h2M0 86.5h1M4 92.5h4M6 92.5h2M15 91.5h3M17 90.5h3M23 91.5h2M26 94l1 1M33 93.5h4M39 92.5h4M43 92.5h3M50 94l2 2M52 93.5h3M61 91.5h4M65 94l1 1M72 93.5h2M76 92.5h2M81 92.5h1M84 90.5h4M93 94.5h2M98 92.5h2M104 93l1 1M105 92.5h1M110 90.5h2M115 92.5h4M124 94.5h3M125 90l2 2M127 92.5h2M133 94.5h1M136 91.5h4M144 93.5h4M147 92.5h1M156 94.5h1M161 93.5h1M162 93l2 2M4 96l1 1M5 97.5h3M10 97.5h1M14 98l1 1M20 97.5h4M24 96.5h2M29 99.5h2M35 98l1 1M40 97.5h2M47 98l3 3M53 98.5h1M55 97.5h2M63 99.5h3M69 96.5h2M73 98.5h4M75 96.5h2M84 99.5h2M89 96.5h1M94 98.5h4M101 95l2 2M105 94.5h2M108 98.5h1M115 95l1 1M116 96.5h3M121 95.5h1M126 96.5h3M127 99.5h2M135 95.5h2M141 96l2 2M146 96.5h1M152 96.5h2M155 95.5h2M163 95.5h4M0 96.5h2M3 101.5h4M7 101.5h3M15 102.5h2M19 102.5h3M22 101.5h4M28 100.5h4M31 100l2 2M33 102.5h2M39 100.5h4M44 100l3 3M47 100.5h4M55 101.5h2M61 103l2 2M64 101.5h1M69 103l2 2M71 105.5h3M76 103l3 3M79 106.5h2M82 104.5h2M83 103.5h3M90 102.5h1M96 100l2 2M102 103.5h2M107 99.5h4M111 101.5h1M118 102.5h1M124 100.5h3M128 102l1 1M131 101.5h4M137 101.5h2M144 103l1 1M145 104.5h3M149 99.5h4M155 102.5h1M157 100l3 3M160 103.5h3M162 103l1 1M4 106.5h3M12 107.5h3M15 108.5h4M21 107.5h2M24 104l1 1M25 105.5h3M30 106.5h4M34 108.5h2M42 105l1 1M45 107.5h1M51 105.5h3M55 104.5h4M64 108.5h4M66 107.5h2M73 104.5h2M78 104.5h1M82 104.5h4M90 107.5h3M95 105.5h1M99 106.5h3M104 105.5h1M107 107.5h4M116 107.5h2M120 105.5h1M127 106.5h3M127 107.5h3M134 107l2 2M140 108l2 2M148 105l2 2M150 107.5h3M148 107.5h3M157 106.5h4M159 107.5h1M1 104l2 2M3 106.5h2M5 109.5h2M6 112.5h3M11 111.5h2M18 110.5h4M25 111.5h1M31 108.5h4M34 108.5h2M39 111l1 1M43 112.5h3M52 110.5h2M55 109l3 3M60 112.5h1M63 112.5h1M72 109.5h4M73 109.5h2M79 108l2 2M81 110.5h3M87 111.5h4M90 110.5h1M97 109.5h4M101 112.5h3M108 112.5h1M112 109.5h3M118 111.5h1M124 111.5h4M129 112.5h4M133 111.5h4M137 112.5h4M144 110.5h4M151 109l3 3M153 108.5h1M157 111.5h1M162 112l3 3" stroke="#1f3658" stroke-width="1" fill="none" shape-rendering="crispEdges"/><use href="#pblue_p" x="-167"/><use href="#pblue_p" y="-113"/><use href="#pblue_p" x="-167" y="-113"/></pattern>
<pattern id="pbwall" width="181" height="131" patternUnits="userSpaceOnUse"><path id="pbwall_p" d="M10 9.5h8M16 6.5h4M48.5 1v9M48 10.5h3M53 3.5h7M68.5 10v13M68 23.5h3M95.5 12v8M95 12.5h4M102 12.5h7M120.5 4v8M115 4.5h5M131.5 8v10M126 18.5h5M156.5 9v6M170.5 5v12M167 5.5h3M19.5 25v9M40.5 17v10M43 22.5h6M58.5 25v11M58 36.5h5M90.5 20v11M90 20.5h3M96 19.5h4M124.5 20v9M129 16.5h5M141.5 25v13M137 25.5h4M172 21.5h4M175.5 17v12M175 17.5h6M2 32.5h6M24.5 29v8M24 37.5h4M38.5 27v11M38 27.5h5M62 30.5h6M80 29.5h6M98.5 30v6M93 36.5h5M103 32.5h6M121 34.5h7M137 37.5h7M164.5 38v8M164 46.5h5M176 35.5h5M18.5 51v12M18 63.5h5M27 45.5h5M54 41.5h7M74 41.5h4M79.5 41v6M74 41.5h5M100 42.5h4M113 51.5h4M135 46.5h8M150.5 40v11M161.5 43v12M2.5 44v12M2 44.5h4M5.5 64v7M1 64.5h4M26 57.5h7M37.5 65v8M37 73.5h5M53 52.5h6M74.5 56v7M98.5 55v8M98.5 59v13M119.5 55v10M119 55.5h6M146.5 64v8M146 64.5h5M148 56.5h8M166.5 52v7M17 65.5h7M35 74.5h7M56.5 76v9M65.5 75v6M81 69.5h6M93.5 71v13M116.5 71v6M112 77.5h4M124.5 77v12M157.5 74v7M157 81.5h3M161.5 77v8M157 85.5h4M1 74.5h6M0 86.5h8M18.5 84v13M18 97.5h5M37 85.5h6M64 85.5h6M66 81.5h6M91.5 80v11M85 80.5h6M109 79.5h4M129.5 85v12M139 82.5h4M157 83.5h7M176.5 81v13M10.5 99v9M10 108.5h5M37.5 96v12M47 92.5h5M70.5 96v6M66 96.5h4M82.5 101v13M76 114.5h6M94.5 100v12M115.5 98v8M135 92.5h6M155 96.5h4M168 97.5h4M5.5 95v9M2.5 107v9M26 116.5h6M36.5 109v13M32 122.5h4M50 112.5h6M65 105.5h7M85 105.5h8M108 117.5h5M130 111.5h4M143.5 113v6M137 113.5h6M162.5 117v12M158 129.5h4M166 111.5h8M9 127.5h7M34.5 124v12M34 124.5h4M46 123.5h5M67.5 119v10M79.5 119v9M104 130.5h6M108.5 127v9M138.5 129v11M138 129.5h3M153.5 125v6M168 121.5h7M1.5 122v8M-4 130.5h5" stroke="#45290f" stroke-width="1" fill="none" shape-rendering="crispEdges"/><use href="#pbwall_p" x="-181"/><use href="#pbwall_p" y="-131"/><use href="#pbwall_p" x="-181" y="-131"/></pattern>
<clipPath id="cbrown"><path d="M56.0 336.0 L64.0 332.0 L76.0 320.0 L88.0 308.0 L99.0 300.0 L116.0 290.0 L150.0 263.0 L188.0 246.0 L200.0 242.0 L221.0 235.0 L245.0 231.0 L284.0 230.0 L315.0 238.0 L347.0 252.0 L378.0 265.0 L395.5 275.0 L412.7 285.7 L425.0 298.0 L433.6 308.4 L439.7 320.6 L439.7 359.0 L438.9 373.0 L428.4 380.0 L411.0 388.7 L393.5 395.7 L385.0 401.0 L353.6 408.0 L318.7 413.0 L263.0 416.5 L235.0 409.5 L208.6 403.0 L188.0 396.8 L157.5 391.7 L132.0 387.9 L104.0 382.7 L91.0 377.7 L82.0 370.0 L70.0 358.0 Z"/></clipPath>
<pattern id="pwall" width="151" height="97" patternUnits="userSpaceOnUse"><path id="pwall_p" d="M3.5 2v7M12 3.5h6M22 3.5h5M26.5 2v9M33.5 4v9M48 2.5h3M50 0.5h3M65 1.5h4M71 2.5h3M79.5 1v4M89 1.5h5M92 2.5h3M107.5 1v9M109.5 0v7M120 3.5h4M132 1.5h5M134.5 1v5M144 0.5h6M5 6.5h4M21 7.5h6M22 6.5h5M36 8.5h3M39.5 5v9M51 4.5h6M56 7.5h5M66 4.5h4M71 5.5h4M88 6.5h6M89.5 4v8M98.5 5v8M106.5 8v8M114 4.5h5M123 7.5h6M132.5 4v4M139 6.5h3M149 8.5h3M0 10.5h3M9 10.5h4M17 9.5h5M30 11.5h4M38 12.5h5M47 12.5h3M54 11.5h3M59.5 10v9M73.5 8v6M78.5 11v7M92 8.5h3M97 10.5h3M101.5 11v7M115.5 10v8M121 10.5h3M128 8.5h3M138.5 11v6M150 10.5h4M8 15.5h6M16 13.5h5M22.5 14v5M37 14.5h5M39 13.5h3M52 16.5h4M55.5 14v7M66 14.5h6M74 16.5h3M85 13.5h3M93 14.5h5M98 13.5h3M108 15.5h5M121 15.5h6M123.5 15v8M136 13.5h5M143 16.5h4M150.5 16v4M3 20.5h6M12.5 19v7M21 19.5h5M29 19.5h3M35.5 20v6M46 20.5h3M53 17.5h6M65 18.5h3M70 17.5h4M79.5 21v8M91.5 19v7M97.5 19v7M105.5 18v9M110.5 19v6M120.5 18v8M127.5 20v8M136 19.5h3M146 19.5h3M8.5 22v8M13 21.5h6M24.5 25v6M31 23.5h6M42 21.5h3M54.5 21v4M54 21.5h5M65 22.5h3M75.5 23v8M81 21.5h6M88.5 23v8M97 21.5h4M109 24.5h4M115.5 24v5M124.5 22v5M136 21.5h4M139 21.5h6M3.5 22v5M1.5 28v4M10.5 28v6M17.5 27v8M33.5 28v7M34 25.5h6M43 26.5h4M58 29.5h3M59 28.5h3M69 27.5h6M77 26.5h3M91 26.5h5M95 26.5h3M103.5 25v9M117 27.5h5M124.5 26v9M132.5 25v5M141 29.5h6M149.5 27v4M11 30.5h5M21 33.5h5M29 32.5h6M34 31.5h6M43.5 32v8M46.5 32v6M58.5 31v9M66 29.5h5M76.5 31v8M87 29.5h3M92.5 32v7M104 30.5h4M112 31.5h6M121 31.5h5M124 30.5h5M135 32.5h4M143 32.5h6M147 30.5h5M0 37.5h6M10 36.5h3M24 36.5h4M30 34.5h6M34 37.5h4M43 35.5h6M55 36.5h5M65.5 36v6M73 34.5h5M82 36.5h5M89 36.5h4M97 36.5h4M104 36.5h3M114 33.5h3M122 34.5h3M132 37.5h4M139 35.5h4M145 35.5h3M11.5 39v5M16 41.5h4M24.5 40v6M31.5 41v5M41 39.5h5M46 38.5h6M61.5 39v4M63 38.5h3M77.5 40v6M82 38.5h5M91 38.5h5M100 41.5h5M106.5 42v8M115 39.5h5M127.5 40v9M134 41.5h4M140.5 41v6M2 38.5h4M4 46.5h6M8.5 44v4M19 43.5h5M25 44.5h6M35.5 43v8M44 44.5h5M56 44.5h3M64 46.5h5M74.5 45v7M83 44.5h3M90 43.5h4M94 42.5h4M103 43.5h5M117 42.5h3M120.5 42v4M132 42.5h3M136 43.5h4M147 44.5h6M5 47.5h5M18 50.5h5M25.5 48v9M34 50.5h4M41 47.5h6M54.5 49v4M60 47.5h6M70 48.5h6M76 47.5h5M81.5 50v5M93 50.5h3M97 49.5h4M112 46.5h3M121 49.5h5M121 47.5h3M136 48.5h6M143.5 47v6M149 48.5h6M5 50.5h4M9 52.5h3M22 50.5h6M27 53.5h3M40 54.5h4M44 52.5h5M58 53.5h3M60.5 51v6M69 51.5h5M79 52.5h3M85 53.5h4M95 54.5h3M101.5 50v7M112.5 50v7M125 51.5h4M132 52.5h6M139 53.5h5M0 54.5h3M6 55.5h6M13 56.5h5M28 57.5h5M34 56.5h4M42.5 55v9M52 58.5h3M60 55.5h4M67 56.5h3M79 56.5h3M83 57.5h3M93.5 55v6M101.5 55v6M110.5 56v6M120 55.5h3M125.5 56v9M131.5 58v7M143.5 57v5M148 56.5h6M1 60.5h4M10 61.5h3M22 62.5h6M30 61.5h6M40.5 61v9M45 60.5h5M54.5 60v6M66 60.5h6M73.5 61v6M83 62.5h6M85.5 62v7M98 61.5h5M106.5 63v9M117.5 61v7M122 59.5h6M130 62.5h4M135.5 61v4M145 62.5h4M4.5 67v7M13 66.5h5M21 67.5h6M30.5 66v5M39 66.5h3M47 66.5h6M54 65.5h4M67.5 64v4M77.5 64v6M87 66.5h6M91.5 63v4M102 64.5h4M109 64.5h3M118 64.5h4M127 64.5h3M134.5 63v4M143 63.5h5M0 65.5h4M2 70.5h5M14.5 67v5M25 67.5h6M25 71.5h3M38 70.5h6M48 69.5h4M55 70.5h6M60.5 69v9M73 68.5h4M82 70.5h4M89 70.5h4M95 70.5h6M104.5 70v4M109 71.5h4M122 67.5h5M132.5 70v8M138 70.5h6M144 68.5h6M4 73.5h4M18 75.5h4M22.5 73v4M29 73.5h3M41 72.5h3M54 74.5h4M57.5 72v7M66 75.5h5M79 75.5h4M83 74.5h5M93.5 75v5M100.5 73v7M108 71.5h4M114 74.5h4M125.5 74v7M133 75.5h6M140 73.5h5M150 72.5h4M6 78.5h4M10 77.5h5M17.5 76v4M25 77.5h3M40 77.5h3M44 78.5h4M51 78.5h5M62 77.5h5M69 77.5h4M82 78.5h4M87 79.5h5M95 78.5h3M107 77.5h5M114.5 76v8M123.5 78v6M127 78.5h6M135 78.5h5M145 78.5h6M6 83.5h4M17.5 83v5M25.5 81v6M35 80.5h5M45 84.5h6M50 82.5h5M62 80.5h5M70 82.5h4M76 81.5h5M80 83.5h3M93 82.5h6M97 80.5h6M108 84.5h4M119 81.5h6M130 80.5h4M132 81.5h6M138.5 82v8M147.5 83v9M8 85.5h3M11 87.5h4M25 87.5h6M32 85.5h5M39 86.5h4M45.5 87v9M51 84.5h3M66.5 85v8M73 86.5h6M82 84.5h6M86 87.5h5M93 88.5h4M105 86.5h5M115 84.5h5M119 85.5h4M128 85.5h6M137 87.5h4M148 84.5h5M7.5 90v7M15 88.5h6M22 88.5h5M31 91.5h4M46 90.5h5M53 89.5h3M59.5 92v7M64 89.5h4M73 90.5h3M83 90.5h3M89.5 88v9M97 89.5h4M113 90.5h5M120 90.5h5M124.5 92v7M135 92.5h3M146 90.5h5M149 91.5h6M0.5 93v4M14 93.5h6M20.5 96v4M33.5 94v7M35 96.5h4M43 94.5h5M57 94.5h5M61 93.5h3M69 93.5h3M81 95.5h4M86 93.5h4M95 92.5h6M101.5 96v5M109 93.5h3M122 94.5h4M130.5 96v6M134.5 94v5M149 95.5h6" stroke="#1f3658" stroke-width="1" fill="none" shape-rendering="crispEdges"/><use href="#pwall_p" x="-151"/><use href="#pwall_p" y="-97"/><use href="#pwall_p" x="-151" y="-97"/></pattern>
<linearGradient id="ggreen" x1="0.25" y1="0.35" x2="0.95" y2="0.7"><stop offset="0.35" stop-color="#06d806"/><stop offset="1" stop-color="#1f9a1f"/></linearGradient>
<linearGradient id="gorange" x1="0.25" y1="0.35" x2="0.95" y2="0.7"><stop offset="0.35" stop-color="#ffd000"/><stop offset="1" stop-color="#ff9a00"/></linearGradient>
<linearGradient id="gmag" x1="0.25" y1="0.35" x2="0.95" y2="0.7"><stop offset="0.5" stop-color="#ff20ff"/><stop offset="1" stop-color="#e018e0"/></linearGradient>
</defs>
<g shape-rendering="crispEdges">
<path d="M3.0 323.0 L20.0 325.0 L38.0 337.0 L56.0 350.0 L56.5 408.0 L56.0 423.0 L49.0 431.0 L43.0 439.0 L41.5 450.0 L39.0 464.0 L37.5 485.0 L3.0 487.0 Z" fill="url(#pbrown)"/>
<path d="M56.0 336.0 L64.0 332.0 L76.0 320.0 L88.0 308.0 L99.0 300.0 L116.0 290.0 L150.0 263.0 L188.0 246.0 L200.0 242.0 L221.0 235.0 L245.0 231.0 L284.0 230.0 L315.0 238.0 L347.0 252.0 L378.0 265.0 L395.5 275.0 L412.7 285.7 L425.0 298.0 L433.6 308.4 L439.7 320.6 L439.7 359.0 L438.9 373.0 L428.4 380.0 L411.0 388.7 L393.5 395.7 L385.0 401.0 L353.6 408.0 L318.7 413.0 L263.0 416.5 L235.0 409.5 L208.6 403.0 L188.0 396.8 L157.5 391.7 L132.0 387.9 L104.0 382.7 L91.0 377.7 L82.0 370.0 L70.0 358.0 Z" fill="url(#pbrown)"/>
<path d="M50.0 345.0 L100.8 308.4 L150.0 298.0 L196.0 293.0 L240.0 296.0 L278.0 305.0 L332.0 322.0 L366.0 356.0 L373.0 400.0 L330.0 430.0 L200.0 430.0 L50.0 400.0 Z" fill="url(#pbwall)" clip-path="url(#cbrown)"/>
<path d="M633.0 342.0 L645.0 340.0 L662.0 332.3 L676.5 330.6 L708.0 324.6 L723.0 320.0 L745.0 312.7 L768.0 309.8 L774.0 304.7 L781.6 300.4 L786.0 299.0 L800.0 298.4 L815.0 297.2 L831.0 296.3 L846.0 297.2 L858.0 299.2 L868.0 302.5 L875.0 303.6 L910.0 310.6 L957.0 316.0 L979.5 330.0 L1014.0 335.0 L1028.0 350.7 L1056.0 364.6 L1084.0 375.0 L1098.0 385.6 L1098.0 392.0 L1084.0 406.5 L1063.0 420.0 L1035.0 434.0 L1014.0 448.0 L979.5 462.0 L944.6 473.0 L910.0 485.0 L875.0 497.0 L840.0 504.0 L827.0 504.0 L795.0 494.0 L767.0 480.0 L748.0 470.0 L734.5 459.3 L720.8 449.5 L709.0 441.7 L697.4 432.0 L691.5 414.0 L681.7 404.5 L670.0 401.6 L657.5 394.0 L645.0 375.0 Z" fill="url(#pblue)"/>
<path d="M691.0 431.0 L740.0 440.0 L790.0 446.0 L826.0 449.5 L880.0 454.0 L936.0 453.0 L1009.0 442.0 L1046.0 427.5 L1082.0 409.0 L1098.0 392.0 L1084.0 406.5 L1063.0 420.0 L1035.0 434.0 L1014.0 448.0 L979.5 462.0 L944.6 473.0 L910.0 485.0 L875.0 497.0 L840.0 504.0 L827.0 504.0 L795.0 494.0 L767.0 480.0 L748.0 470.0 L734.5 459.3 L720.8 449.5 L709.0 441.7 L697.4 432.0 Z" fill="url(#pwall)"/>
</g>
<g fill="none" stroke="#fff" stroke-linecap="round" stroke-linejoin="round">
<path d="M53.5 405.7 C54.7 404.9 56.9 402.6 60.6 401.0 C64.3 399.4 70.5 397.3 76.0 396.3 C81.5 395.3 84.5 395.1 93.8 395.0 C103.1 394.9 122.6 395.1 132.0 395.5 C141.4 395.9 141.5 396.0 150.0 397.5 C158.5 399.0 171.1 401.8 183.0 404.4 C194.9 407.0 208.5 410.1 221.3 412.9 C234.1 415.7 249.8 419.0 259.6 421.0 C269.4 423.0 271.5 423.7 280.0 424.8 C288.5 425.9 301.8 426.7 310.6 427.4 C319.4 428.1 322.0 428.7 333.0 428.9 C344.0 429.1 360.8 428.8 376.5 428.4 C392.2 428.0 410.5 427.4 427.5 426.8 C444.5 426.2 461.6 425.6 478.6 425.0 C495.6 424.4 518.5 423.6 529.6 423.3 C540.7 423.0 538.4 423.5 545.0 423.0 C551.6 422.5 562.3 421.1 569.0 420.3 C575.7 419.5 580.2 419.0 585.0 418.4 C589.8 417.8 592.6 417.0 598.0 416.9 C603.4 416.8 610.9 415.7 617.3 417.8 C623.7 419.9 630.1 426.4 636.6 429.4 C643.1 432.3 647.8 435.2 656.0 435.5 C664.2 435.8 681.0 431.9 686.0 431.2" stroke-width="3.4"/>
<path d="M416.8 379.9 C417.5 381.2 419.2 385.4 421.0 388.0 C422.8 390.6 424.7 393.4 427.5 395.7 C430.3 398.0 433.6 399.9 437.8 402.0 C442.1 404.1 446.2 406.2 453.0 408.5 C459.8 410.8 470.9 413.9 478.6 416.0 C486.3 418.1 492.6 420.0 499.0 421.2 C505.4 422.4 511.3 422.9 516.8 423.3 C522.3 423.7 529.5 423.3 532.0 423.3" stroke-width="3.4"/>
<path d="M599.0 417.0 C597.2 415.6 591.3 411.0 588.0 408.5 C584.7 406.0 581.1 405.0 579.0 402.0 C576.9 399.0 576.7 395.1 575.5 390.6 C574.3 386.2 572.8 380.7 571.7 375.3 C570.6 369.9 569.6 363.5 569.0 358.0 C568.4 352.5 568.0 345.1 567.8 342.5" stroke-width="3.4"/>
<path d="M567.8 342.5 C575.2 340.1 600.5 331.8 612.5 328.0 C624.5 324.2 632.6 321.8 640.0 319.5 C647.4 317.2 649.9 315.9 657.0 314.4 C664.1 312.9 675.3 311.8 682.5 310.6 C689.7 309.4 692.9 308.6 700.0 307.4 C707.1 306.2 716.5 304.8 725.0 303.4 C733.5 302.0 741.0 300.6 751.0 299.1 C761.0 297.6 776.0 295.8 785.0 294.5 C794.0 293.2 799.8 292.2 805.0 291.6 C810.2 291.1 808.4 291.1 816.0 291.2 C823.6 291.3 840.8 292.2 850.6 292.5 C860.4 292.8 870.9 292.7 875.0 292.7" stroke-width="3.4"/>
<path d="M875.0 292.7 C876.5 292.4 880.8 291.4 884.0 290.6 C887.2 289.8 889.6 288.8 894.0 287.8 C898.4 286.8 903.3 285.7 910.5 284.6 C917.7 283.5 932.6 281.6 937.0 281.0" stroke-width="3.4"/>
<path d="M608 329.5 L677 328.7" stroke-width="3.2"/>
<path d="M656.2 317.5 L674 328" stroke-width="2.6"/>
<path d="M698 308.8 L746 306.5 L795 306" stroke-width="2.6"/>
<path d="M749.5 301.2 L759 305.6" stroke-width="2"/>
<path d="M699 307.5 L739 301.2 L739 306.4 L699 309 Z" fill="#fff" stroke="none"/>
<path d="M690.0 428.0 C691.2 427.7 692.6 427.9 697.4 426.0 C702.2 424.1 712.4 419.7 718.9 416.3 C725.4 412.9 731.6 409.2 736.5 405.5 C741.4 401.8 744.0 397.2 748.2 393.8 C752.5 390.4 756.8 387.6 762.0 385.0 C767.2 382.4 772.0 379.9 779.5 378.0 C787.0 376.1 799.2 374.4 807.0 373.6 C814.8 372.8 820.7 372.8 826.5 373.2 C832.3 373.6 837.5 374.5 842.0 376.0 C846.5 377.5 849.7 379.7 853.8 382.0 C857.9 384.3 864.4 388.7 866.5 390.0" stroke-width="3"/>
<path d="M736.5 405.5 C738.4 405.0 743.8 403.2 748.0 402.6 C752.2 402.0 757.7 401.4 762.0 402.0 C766.3 402.6 770.6 404.9 773.7 406.5 C776.8 408.1 779.4 410.6 780.5 411.4" stroke-width="1.8"/>
<path d="M690.0 429.5 C691.2 429.4 692.6 428.6 697.4 429.0 C702.2 429.4 712.1 430.5 719.0 432.0 C725.9 433.5 732.0 436.0 738.5 437.8 C745.0 439.6 751.5 441.4 758.0 442.7 C764.5 444.0 771.1 445.0 777.6 445.6 C784.1 446.2 793.8 446.4 797.0 446.6" stroke-width="2.4"/>
<path d="M797 446.6 L826 447.2" stroke-width="1.4" stroke-dasharray="7 4"/>
<path d="M206.9 285.2 L214.6 286.5 L229 287.5 L241.8 288.6 L252.8 289.8 L263 289.8 L271.5 288 L277.8 284.3 L278.2 286.5 L272 290.6 L263 292.7 L252.8 293.4 L241.8 291.7 L229 289.7 L214.6 288.2 L206.9 286.3 Z" fill="#fff" stroke="none"/>
</g>
<g>
<path d="M45.3 403.0 C46.1 400.8 48.1 394.4 49.9 389.5 C51.7 384.6 54.0 378.9 56.1 373.5 C58.2 368.2 60.2 362.3 62.3 357.6 C64.3 352.8 66.4 348.6 68.4 345.2 C70.5 341.9 72.3 339.4 74.5 337.3 C76.8 335.2 79.3 333.0 81.9 332.7 C84.5 332.4 87.9 334.1 89.9 335.4 C91.9 336.7 93.0 338.5 93.7 340.6 C94.5 342.7 94.7 345.1 94.3 348.0 C93.9 350.9 92.9 354.5 91.5 357.8 C90.1 361.1 88.1 364.2 85.9 367.6 C83.7 371.1 81.1 374.7 78.1 378.7 C75.1 382.6 71.2 387.7 67.9 391.4 C64.5 395.1 60.5 398.2 58.0 400.8 C55.6 403.4 53.8 406.0 53.0 407.0 Z" fill="#ff0000"/><path d="M45.3 403.0 C46.1 400.8 48.1 394.4 49.9 389.5 C51.7 384.6 54.0 378.9 56.1 373.5 C58.2 368.2 60.2 362.3 62.3 357.6 C64.3 352.8 66.4 348.6 68.4 345.2 C70.5 341.9 72.3 339.4 74.5 337.3 C76.8 335.2 80.2 333.2 81.9 332.7 C83.6 332.2 84.5 332.7 85.0 334.2 C85.5 335.7 85.3 338.7 85.0 341.6 C84.7 344.4 84.0 348.1 83.1 351.4 C82.2 354.7 81.1 357.7 79.5 361.2 C77.8 364.7 75.8 368.6 73.3 372.3 C70.8 376.0 67.8 379.7 64.7 383.4 C61.6 387.0 58.1 391.1 54.9 394.4 C51.6 397.7 46.9 401.6 45.3 403.0 Z" fill="#8b0000"/><ellipse cx="70.4" cy="356.3" rx="4.2" ry="10.1" transform="rotate(30 71.1 356.9)" fill="#c00000"/><ellipse cx="71.5" cy="357.4" rx="3.8" ry="9.5" transform="rotate(30 71.1 356.9)" fill="#ff0000"/>
<path d="M416.0 372.0 C416.8 369.7 418.9 363.4 420.7 358.4 C422.5 353.5 424.8 347.7 426.9 342.3 C428.9 337.0 431.0 331.0 433.1 326.3 C435.1 321.5 437.2 317.3 439.3 313.9 C441.3 310.5 443.1 308.0 445.4 305.9 C447.7 303.8 450.3 301.6 452.8 301.3 C455.4 301.0 458.9 302.7 460.9 304.0 C462.9 305.3 464.0 307.1 464.8 309.2 C465.5 311.3 465.7 313.7 465.3 316.6 C464.9 319.5 463.9 323.2 462.5 326.5 C461.1 329.8 459.1 332.9 456.8 336.4 C454.6 339.9 452.1 343.5 449.1 347.5 C446.0 351.5 442.1 356.6 438.7 360.3 C435.3 364.0 431.3 367.2 428.8 369.8 C426.3 372.4 424.6 375.0 423.7 376.1 Z" fill="#ff0000"/><path d="M416.0 372.0 C416.8 369.7 418.9 363.4 420.7 358.4 C422.5 353.5 424.8 347.7 426.9 342.3 C428.9 337.0 431.0 331.0 433.1 326.3 C435.1 321.5 437.2 317.3 439.3 313.9 C441.3 310.5 443.1 308.0 445.4 305.9 C447.7 303.8 451.1 301.8 452.8 301.3 C454.6 300.7 455.4 301.3 456.0 302.7 C456.5 304.2 456.3 307.3 456.0 310.2 C455.7 313.1 455.0 316.8 454.1 320.1 C453.1 323.4 452.0 326.4 450.4 329.9 C448.7 333.5 446.7 337.4 444.2 341.1 C441.7 344.8 438.6 348.5 435.5 352.2 C432.4 355.9 428.9 360.0 425.6 363.3 C422.4 366.6 417.6 370.6 416.0 372.0 Z" fill="#8b0000"/><ellipse cx="441.2" cy="325.0" rx="4.2" ry="10.2" transform="rotate(30 442.0 325.6)" fill="#c00000"/><ellipse cx="442.3" cy="326.1" rx="3.8" ry="9.6" transform="rotate(30 442.0 325.6)" fill="#ff0000"/>
<path d="M528.3 421.5 C528.7 420.4 529.7 417.2 530.6 414.8 C531.5 412.3 532.7 409.4 533.7 406.8 C534.7 404.1 535.8 401.1 536.8 398.8 C537.8 396.4 538.8 394.3 539.9 392.6 C540.9 390.9 541.8 389.7 542.9 388.7 C544.0 387.6 545.5 386.6 546.6 386.4 C547.7 386.2 548.9 386.9 549.7 387.4 C550.5 387.9 551.2 388.6 551.5 389.6 C551.9 390.5 551.9 391.8 551.7 393.3 C551.5 394.7 551.1 396.5 550.4 398.2 C549.8 399.8 548.9 401.3 547.9 403.1 C546.8 404.8 545.6 406.7 544.2 408.6 C542.7 410.5 540.9 412.9 539.2 414.8 C537.6 416.6 535.6 418.3 534.3 419.7 C533.0 421.1 531.8 422.5 531.3 423.1 Z" fill="url(#ggreen)"/><path d="M528.3 421.5 C528.6 420.5 529.6 417.6 530.4 415.4 C531.2 413.2 532.2 410.6 533.2 408.2 C534.1 405.8 535.0 403.2 535.9 401.0 C536.9 398.9 537.8 397.0 538.7 395.5 C539.6 394.0 540.4 392.9 541.4 391.9 C542.5 391.0 544.0 390.1 544.8 389.9 C545.6 389.6 545.9 389.9 546.2 390.5 C546.4 391.2 546.3 392.6 546.2 393.9 C546.0 395.1 545.7 396.8 545.3 398.3 C544.9 399.8 544.4 401.1 543.7 402.7 C542.9 404.3 542.0 406.0 540.9 407.7 C539.8 409.4 538.4 411.0 537.0 412.7 C535.6 414.3 534.1 416.2 532.6 417.6 C531.2 419.1 529.0 420.9 528.3 421.5 Z" fill="#0a6a0a"/><ellipse cx="540.1" cy="401.0" rx="1.7" ry="4.3" transform="rotate(30 539.9 400.8)" fill="#14c814"/>
<path d="M684.1 428.6 C684.9 426.2 687.1 419.6 689.0 414.5 C690.9 409.3 693.3 403.3 695.4 397.7 C697.6 392.1 699.7 385.9 701.9 380.9 C704.0 376.0 706.2 371.5 708.4 368.0 C710.5 364.5 712.4 361.9 714.8 359.7 C717.1 357.5 719.9 355.2 722.5 354.9 C725.1 354.5 728.6 356.3 730.6 357.6 C732.6 358.9 733.8 360.7 734.6 362.9 C735.3 365.1 735.5 367.6 735.1 370.6 C734.7 373.6 733.7 377.5 732.3 380.9 C730.8 384.4 728.7 387.6 726.4 391.2 C724.1 394.9 721.5 398.7 718.4 402.8 C715.2 406.9 711.2 412.2 707.7 416.1 C704.2 419.9 700.0 423.3 697.3 426.1 C694.7 428.8 692.8 431.6 691.9 432.7 Z" fill="url(#ggreen)"/><path d="M684.1 428.6 C684.9 426.2 687.1 419.6 689.0 414.5 C690.9 409.3 693.3 403.3 695.4 397.7 C697.6 392.1 699.7 385.9 701.9 380.9 C704.0 376.0 706.2 371.5 708.4 368.0 C710.5 364.5 712.4 361.9 714.8 359.7 C717.1 357.5 720.7 355.4 722.5 354.9 C724.3 354.3 725.2 354.9 725.8 356.4 C726.3 358.0 726.1 361.1 725.8 364.2 C725.4 367.2 724.8 371.0 723.8 374.5 C722.8 377.9 721.7 381.1 719.9 384.8 C718.2 388.4 716.1 392.5 713.5 396.4 C710.9 400.3 707.7 404.1 704.5 408.0 C701.2 411.9 697.5 416.1 694.1 419.6 C690.8 423.0 685.8 427.1 684.1 428.6 Z" fill="#005c00"/><ellipse cx="710.4" cy="379.6" rx="4.4" ry="10.6" transform="rotate(30 711.2 380.3)" fill="#0a8a0a"/><ellipse cx="711.6" cy="380.8" rx="4.0" ry="10.0" transform="rotate(30 711.2 380.3)" fill="#12c012"/>
<path d="M679.0 328.4 C679.4 327.3 680.4 324.2 681.3 321.8 C682.2 319.4 683.3 316.5 684.3 313.9 C685.3 311.3 686.3 308.4 687.3 306.0 C688.4 303.7 689.4 301.6 690.4 300.0 C691.4 298.3 692.3 297.1 693.4 296.1 C694.5 295.1 695.8 294.0 697.0 293.8 C698.2 293.7 699.6 294.4 700.5 295.0 C701.4 295.6 702.0 296.4 702.3 297.4 C702.7 298.3 702.7 299.6 702.6 301.0 C702.4 302.4 701.9 304.2 701.3 305.8 C700.6 307.4 699.7 308.9 698.6 310.6 C697.5 312.4 696.3 314.1 694.9 316.1 C693.4 318.0 691.6 320.4 689.9 322.2 C688.3 324.0 686.4 325.6 685.1 327.0 C683.8 328.3 682.8 329.6 682.3 330.2 Z" fill="url(#gorange)" stroke="#f0b000" stroke-width="0.9"/><path d="M679.0 328.4 C679.3 327.4 680.3 324.6 681.1 322.4 C681.8 320.3 682.9 317.7 683.8 315.4 C684.7 313.0 685.6 310.4 686.5 308.3 C687.4 306.2 688.3 304.3 689.2 302.8 C690.1 301.3 690.9 300.2 691.9 299.3 C692.9 298.4 694.4 297.5 695.2 297.3 C696.0 297.1 696.3 297.3 696.6 297.9 C696.8 298.6 696.7 299.9 696.6 301.2 C696.4 302.5 696.1 304.1 695.7 305.6 C695.3 307.0 694.8 308.4 694.1 309.9 C693.4 311.4 692.5 313.2 691.4 314.8 C690.3 316.5 688.9 318.1 687.6 319.7 C686.2 321.3 684.7 323.1 683.2 324.6 C681.8 326.0 679.7 327.8 679.0 328.4 Z" fill="#9a5c00"/><ellipse cx="690.6" cy="308.3" rx="1.7" ry="4.2" transform="rotate(30 690.4 308.0)" fill="#ffd800"/>
<path d="M787.0 304.8 C787.4 303.7 788.4 300.5 789.3 298.0 C790.2 295.5 791.4 292.6 792.5 289.9 C793.5 287.2 794.5 284.2 795.6 281.9 C796.6 279.5 797.6 277.3 798.7 275.6 C799.7 273.9 800.6 272.7 801.8 271.6 C802.9 270.6 804.3 269.5 805.5 269.3 C806.7 269.1 808.1 269.9 809.1 270.5 C810.0 271.1 810.6 271.9 810.9 272.9 C811.3 273.9 811.4 275.2 811.2 276.7 C811.0 278.1 810.5 280.0 809.9 281.6 C809.2 283.3 808.2 284.8 807.1 286.6 C806.0 288.3 804.8 290.2 803.3 292.1 C801.8 294.1 799.9 296.6 798.2 298.5 C796.5 300.3 794.5 302.0 793.3 303.3 C792.0 304.7 790.9 306.1 790.4 306.6 Z" fill="url(#gorange)" stroke="#f0b000" stroke-width="0.9"/><path d="M787.0 304.8 C787.4 303.8 788.3 300.9 789.1 298.7 C789.9 296.4 791.0 293.8 791.9 291.4 C792.8 289.0 793.8 286.3 794.7 284.1 C795.6 282.0 796.6 280.1 797.5 278.5 C798.4 277.0 799.3 275.9 800.3 274.9 C801.3 274.0 802.8 273.1 803.6 272.9 C804.4 272.6 804.8 272.9 805.0 273.5 C805.3 274.2 805.2 275.6 805.0 276.9 C804.9 278.2 804.6 279.9 804.2 281.3 C803.8 282.8 803.3 284.2 802.5 285.8 C801.8 287.4 800.8 289.2 799.7 290.9 C798.6 292.5 797.2 294.2 795.8 295.9 C794.4 297.5 792.8 299.4 791.4 300.9 C789.9 302.4 787.7 304.1 787.0 304.8 Z" fill="#9a5c00"/><ellipse cx="798.9" cy="284.1" rx="1.7" ry="4.3" transform="rotate(30 798.7 283.9)" fill="#ffd800"/>
<path d="M866.4 388.0 C866.8 386.8 867.9 383.5 868.8 380.9 C869.8 378.4 871.0 375.3 872.1 372.5 C873.1 369.7 874.2 366.6 875.3 364.2 C876.4 361.7 877.5 359.5 878.5 357.7 C879.6 355.9 880.5 354.6 881.7 353.5 C882.9 352.4 884.3 351.3 885.6 351.1 C886.9 350.9 888.4 351.8 889.3 352.4 C890.3 353.0 890.9 353.8 891.3 354.9 C891.7 355.9 891.7 357.3 891.5 358.8 C891.3 360.3 890.8 362.2 890.1 363.9 C889.4 365.6 888.4 367.2 887.3 369.1 C886.2 370.9 884.9 372.8 883.3 374.8 C881.8 376.9 879.8 379.5 878.0 381.4 C876.3 383.3 874.2 385.1 872.9 386.5 C871.5 387.9 870.5 389.3 870.0 389.9 Z" fill="url(#gorange)" stroke="#f0b000" stroke-width="0.9"/><path d="M866.4 388.0 C866.8 386.9 867.7 384.0 868.6 381.6 C869.4 379.3 870.5 376.6 871.5 374.1 C872.5 371.6 873.4 368.8 874.4 366.5 C875.4 364.3 876.4 362.3 877.3 360.7 C878.3 359.1 879.1 358.0 880.2 357.0 C881.3 356.0 882.9 355.1 883.7 354.8 C884.5 354.6 884.9 354.8 885.1 355.5 C885.4 356.2 885.3 357.6 885.1 359.0 C885.0 360.4 884.7 362.1 884.3 363.6 C883.8 365.2 883.3 366.6 882.5 368.3 C881.8 369.9 880.8 371.8 879.6 373.5 C878.5 375.3 877.0 377.0 875.6 378.7 C874.1 380.5 872.4 382.4 870.9 383.9 C869.4 385.5 867.2 387.3 866.4 388.0 Z" fill="#9a5c00"/><ellipse cx="878.8" cy="366.5" rx="1.8" ry="4.5" transform="rotate(30 878.6 366.3)" fill="#ffd800"/>
<path d="M932.5 278.9 C933.8 275.2 937.1 264.8 940.1 256.8 C943.1 248.7 946.8 239.3 950.2 230.6 C953.6 221.9 956.9 212.1 960.3 204.4 C963.7 196.7 967.0 189.7 970.4 184.2 C973.8 178.7 976.7 174.6 980.4 171.2 C984.1 167.8 988.8 164.4 992.5 163.7 C996.2 163.0 999.9 165.3 1002.6 167.1 C1005.3 168.8 1007.5 171.0 1008.6 174.2 C1009.7 177.4 1009.9 181.6 1009.3 186.3 C1008.7 191.0 1007.2 197.0 1005.1 202.4 C1003.0 207.8 1000.0 212.8 996.6 218.5 C993.2 224.2 989.2 230.2 984.5 236.6 C979.8 243.0 973.7 250.7 968.3 256.8 C962.9 262.8 956.6 268.4 952.2 272.9 C947.9 277.4 943.9 282.1 942.2 284.0 Z" fill="url(#gmag)"/><path d="M932.5 278.9 C933.8 275.2 937.1 264.8 940.1 256.8 C943.1 248.7 946.8 239.3 950.2 230.6 C953.6 221.9 956.9 212.1 960.3 204.4 C963.7 196.7 967.0 189.7 970.4 184.2 C973.8 178.7 976.7 174.6 980.4 171.2 C984.1 167.8 989.6 164.5 992.5 163.7 C995.4 162.8 996.8 163.7 997.6 166.1 C998.5 168.5 998.1 173.5 997.6 178.2 C997.1 182.9 996.0 188.9 994.5 194.3 C993.0 199.7 991.2 204.7 988.5 210.4 C985.8 216.1 982.4 222.5 978.4 228.6 C974.4 234.6 969.3 240.7 964.3 246.7 C959.3 252.7 953.5 259.4 948.2 264.8 C942.9 270.2 935.1 276.5 932.5 278.9 Z" fill="#7a0858"/><ellipse cx="973.6" cy="202.4" rx="6.9" ry="16.6" transform="rotate(30 974.8 203.4)" fill="#c010b0"/><ellipse cx="975.4" cy="204.2" rx="6.2" ry="15.6" transform="rotate(30 974.8 203.4)" fill="#ff1cff"/>
</g>
</svg>
<svg width="1168" height="609" viewBox="3 96 1168 609" style="position:absolute;left:0;top:0;display:block;will-change:transform">
<g font-family="'Liberation Sans',sans-serif" font-weight="bold" font-size="15.4px" fill="#000" stroke="#fff" stroke-width="2.8" stroke-linejoin="round" paint-order="stroke">
<text x="47.5" y="326.1" textLength="43.5" lengthAdjust="spacing">South</text>
<text x="420.9" y="294.7" textLength="40.2" lengthAdjust="spacing">North</text>
<text x="500.9" y="383.4" textLength="80.8" lengthAdjust="spacing">Stockpile 1</text>
<text x="620.2" y="291.7" textLength="142.4" lengthAdjust="spacing">In-Pit Crusher 1 [B]</text>
<text x="693.8" y="348.0" textLength="31.5" lengthAdjust="spacing">Pit 2</text>
<text x="728.6" y="264.9" textLength="142.2" lengthAdjust="spacing">In-Pit Crusher 1 [C]</text>
<text x="807.2" y="346.8" textLength="143.3" lengthAdjust="spacing">In-Pit Crusher 1 [A]</text>
<text x="952.8" y="154.3" textLength="36.4" lengthAdjust="spacing">Mill 1</text>
</g>
<g font-family="'Liberation Sans',sans-serif" font-size="13.5px">
<path d="M1132.8 113 V133.8" stroke="#1fe6f0" stroke-width="1.2" fill="none"/>
<path d="M1132.8 133.6 L1155 132.2" stroke="#00f000" stroke-width="1.3" fill="none"/>
<path d="M1132.4 133.4 L1136.4 138.4" stroke="#ff0000" stroke-width="1.6" fill="none"/>
<text x="1130.8" y="111.5" fill="#1fe6f0" stroke="#1fe6f0" stroke-width="0.5">Z</text>
<text x="1155.8" y="136" fill="#00f000" stroke="#00f000" stroke-width="0.5">N</text>
<text x="1136" y="145.4" fill="#ff0000" stroke="#ff0000" stroke-width="0.5">E</text>
</g>
</svg>
<!--VIEWER_END--></div>
<div id="whiteline" class="abs"></div>

<svg class="abs" style="left:180px;top:575px" width="70" height="135" viewBox="180 575 70 135">
 <path d="M207.1 588 H218 V665 H227.6 L212.6 696.4 L197.5 665 H207.1 Z" fill="#4e9d38" stroke="#fff" stroke-width="5.8" stroke-linejoin="round" paint-order="stroke"/>
</svg>
<!-- BOTTOM BAR -->
<div id="bottombar">
<div class="abs" style="left:41px;top:712px;width:26px;height:22px;background:#dcecf4;"></div>
<div class="sep" style="left:108px;top:710px;height:26px;background:#c6c9dc;"></div>
<div class="abs box" style="left:198px;top:711px;width:135px;height:24px;box-sizing:border-box;"></div>
<div class="abs box" style="left:366px;top:711px;width:50px;height:24px;box-sizing:border-box;"></div>
<span class="lbl" id="bwt" style="left:115.6px;top:717.1px;letter-spacing:0.04px;">Waypoint type</span>
<span class="lbl" id="bsel" style="left:203.6px;top:717.1px;letter-spacing:-0.1px;">&lt;Select on creation&gt;</span>
<span class="lbl" id="bsize" style="left:339.3px;top:717.1px;letter-spacing:-0.75px;">Size</span>
<span class="lbl" id="b10" style="left:384.8px;top:717.1px;letter-spacing:-0.3px;">10</span>
<i class="arrk" style="left:321.6px;top:721.2px;border-left-width:3.2px;border-right-width:3.2px;border-top-width:3.8px;"></i>
<svg class="abs" style="left:0;top:700px" width="440" height="45" viewBox="0 700 440 45">
 <!-- spinner arrows -->
 <path d="M405.8 720.4 L408.8 716.6 L411.8 720.4 Z M405.8 725.8 L408.8 729.6 L411.8 725.8 Z" fill="#111"/>
 <!-- pin 1 -->
 <g>
  <path d="M20 715.6 C23 715.6 24.7 717.8 24.7 720.3 C24.7 723.4 21.6 727.6 20 729.8 C18.4 727.6 15.3 723.4 15.3 720.3 C15.3 717.8 17 715.6 20 715.6 Z" fill="#fff" stroke="#0b72a5" stroke-width="1.4"/>
  <circle cx="20" cy="720.3" r="1.5" fill="#3f97c2" stroke="#0b72a5" stroke-width="1"/>
  <circle cx="23.4" cy="726.4" r="3.8" fill="#f0f0f0"/>
  <path d="M23.4 723 V729.8 M20 726.4 H26.8" stroke="#cf4a52" stroke-width="1.1"/>
  <path d="M22.2 724.2 L23.4 722.8 L24.6 724.2 Z M22.2 728.6 L23.4 730 L24.6 728.6 Z M21.2 725.2 L19.8 726.4 L21.2 727.6 Z M25.6 725.2 L27 726.4 L25.6 727.6 Z" fill="#cf4a52"/>
 </g>
 <!-- pin 2 -->
 <g>
  <path d="M53.8 715.6 C56.8 715.6 58.5 717.8 58.5 720.3 C58.5 723.4 55.4 727.6 53.8 729.8 C52.2 727.6 49.1 723.4 49.1 720.3 C49.1 717.8 50.8 715.6 53.8 715.6 Z" fill="#fff" stroke="#0b72a5" stroke-width="1.4"/>
  <circle cx="53.8" cy="720.3" r="1.5" fill="#3f97c2" stroke="#0b72a5" stroke-width="1"/>
  <path d="M57.1 721.4 V730.4 M52.6 725.9 H61.6" stroke="#f2f7f2" stroke-width="4"/>
  <path d="M57.1 722 V729.8 M53.2 725.9 H61" stroke="#3f9a2c" stroke-width="2.3"/>
 </g>
 <!-- pin 3 -->
 <g>
  <path d="M88 715.6 C91 715.6 92.7 717.8 92.7 720.3 C92.7 722.6 91.2 724.8 90 726.4 H86 C84.8 724.8 83.3 722.6 83.3 720.3 C83.3 717.8 85 715.6 88 715.6 Z" fill="#fff" stroke="#0b72a5" stroke-width="1.4"/>
  <circle cx="88" cy="720.3" r="1.5" fill="#3f97c2" stroke="#0b72a5" stroke-width="1"/>
  <ellipse cx="86.4" cy="727.8" rx="3" ry="1.9" fill="#f0f0f0" stroke="#7fbcd8" stroke-width="1"/>
  <ellipse cx="89.8" cy="727.8" rx="3" ry="1.9" fill="none" stroke="#7fbcd8" stroke-width="1"/>
 </g>
 <!-- green rect -->
 <rect x="4.5" y="704" width="416.6" height="39" fill="none" stroke="#4e9d38" stroke-width="4"/>
</svg>
</div>

</body>
</html>
